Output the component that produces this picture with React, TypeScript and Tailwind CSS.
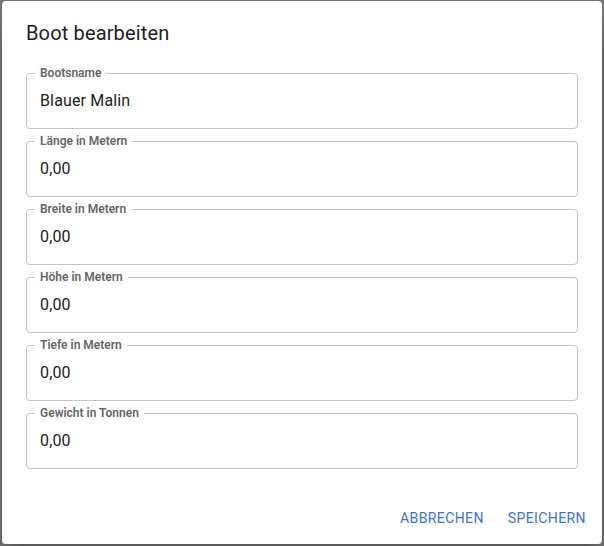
import React from "react";

const fields = [
  { label: "Bootsname", value: "Blauer Malin" },
  { label: "Länge in Metern", value: "0,00" },
  { label: "Breite in Metern", value: "0,00" },
  { label: "Höhe in Metern", value: "0,00" },
  { label: "Tiefe in Metern", value: "0,00" },
  { label: "Gewicht in Tonnen", value: "0,00" },
];

export default function App() {
  return (
    <div
      className="w-[604px] h-[546px] bg-[#757575] pt-[1px] pl-[2px] overflow-hidden"
      style={{ fontFamily: "Roboto, 'Liberation Sans', sans-serif" }}
    >
      <div className="w-[600px] h-[543px] bg-white rounded-[4px] flex flex-col shadow-[0_11px_15px_-7px_rgba(0,0,0,0.2),0_24px_38px_3px_rgba(0,0,0,0.14)]">
        <div className="px-[24px] py-[16px] text-[20px] leading-[32px] font-normal text-[#212121] tracking-[0.0075em]">
          Boot bearbeiten
        </div>
        <div className="px-[24px] pt-[2px] flex flex-col gap-[6px]">
          {fields.map((f) => (
            <fieldset
              key={f.label}
              className="m-0 h-[62px] border border-[#c4c4c4] rounded-[4px] px-[8px] min-w-0"
            >
              <legend className="px-[5px] text-[12px] leading-[12px] font-semibold text-[#666666]">
                {f.label}
              </legend>
              <div className="px-[5px] pt-[12px] text-[16px] leading-[19px] tracking-[0.00938em] text-[#212121]">
                {f.value}
              </div>
            </fieldset>
          ))}
        </div>
        <div className="mt-auto p-[8px] flex justify-end gap-[8px]">
          <button className="h-[36px] px-[8px] min-w-[64px] rounded-[4px] text-[14px] font-normal uppercase tracking-[0.02857em] text-[#4470d6]">
            Abbrechen
          </button>
          <button className="h-[36px] px-[8px] min-w-[64px] rounded-[4px] text-[14px] font-normal uppercase tracking-[0.02857em] text-[#4470d6]">
            Speichern
          </button>
        </div>
      </div>
    </div>
  );
}
